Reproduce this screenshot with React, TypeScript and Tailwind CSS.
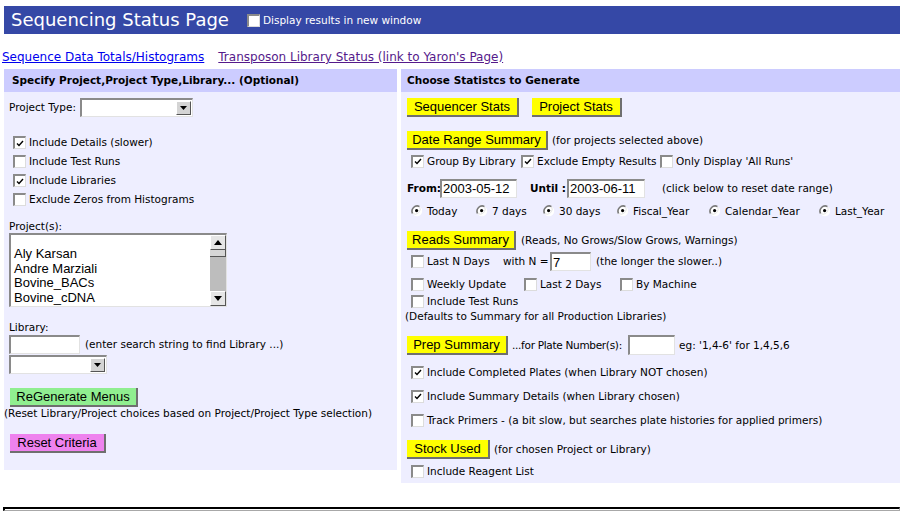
import React from "react";

function Check({ checked = false }: { checked?: boolean }) {
  return (
    <span className="inline-flex w-[13px] h-[13px] shrink-0 bg-white border-t-2 border-l-2 border-[#8a8a8a] border-r border-b border-r-[#dcdcdc] border-b-[#dcdcdc] items-center justify-center">
      {checked && (
        <svg width="8" height="7" viewBox="0 0 8 7">
          <path d="M1 3.5 L3 5.5 L7 1" stroke="#000" strokeWidth="1.4" fill="none" />
        </svg>
      )}
    </span>
  );
}

function Radio() {
  return (
    <svg width="12" height="12" viewBox="0 0 12 12" className="shrink-0">
      <circle cx="6" cy="6" r="5.2" fill="#fff" />
      <path d="M1.6 8.6 A5.2 5.2 0 0 1 8.6 1.6" stroke="#7a7a7a" strokeWidth="1.6" fill="none" />
      <path d="M8.6 1.6 A5.2 5.2 0 0 1 1.6 8.6" stroke="#e4e4e4" strokeWidth="1" fill="none" />
      <circle cx="5.6" cy="5.6" r="1.6" fill="#000" />
    </svg>
  );
}

function Btn({ w, bg, children }: { w: string; bg: string; children: React.ReactNode }) {
  return (
    <span
      className={`${w} ${bg} h-[19px] shrink-0 inline-flex items-center justify-center border-r-2 border-b-2 border-[#6f6f6f] font-['Liberation_Sans',sans-serif] text-[13px] text-black`}
    >
      {children}
    </span>
  );
}

function Field({ w, h = "h-[19px]", value }: { w: string; h?: string; value?: string }) {
  return (
    <span
      className={`${w} ${h} shrink-0 inline-flex items-center bg-white border-t-2 border-l-2 border-[#8a8a8a] border-r border-b border-r-[#e2e2e2] border-b-[#e2e2e2] pl-[1px] font-['Liberation_Sans',sans-serif] text-[13px] text-black`}
    >
      {value}
    </span>
  );
}

function Select({ w }: { w: string }) {
  return (
    <span
      className={`${w} h-[19px] shrink-0 inline-flex justify-end items-center bg-white border-t-2 border-l-2 border-[#8a8a8a] border-r border-b border-r-[#e2e2e2] border-b-[#e2e2e2] pr-[1px]`}
    >
      <span className="w-[15px] h-[14px] bg-[#d4d4d4] border-t border-l border-white border-r border-b border-r-[#555] border-b-[#555] flex items-center justify-center">
        <svg width="7" height="4" viewBox="0 0 7 4">
          <path d="M0 0 H7 L3.5 4 Z" fill="#000" />
        </svg>
      </span>
    </span>
  );
}

function CheckRow({ checked, label, h = "h-[19px]", cls = "" }: { checked?: boolean; label: string; h?: string; cls?: string }) {
  return (
    <div className={`${h} ${cls} flex items-center gap-[3px]`}>
      <Check checked={checked} />
      <span className="whitespace-nowrap">{label}</span>
    </div>
  );
}

export default function App() {
  return (
    <div className="w-[908px] h-[516px] bg-white overflow-hidden font-['DejaVu_Sans',sans-serif] text-[10.5px] text-black leading-none">
      {/* title bar */}
      <div className="mt-[6px] ml-[4px] w-[896px] h-[28px] bg-[#3548a6] flex items-center pl-[7px] text-white">
        <span className="text-[18px]">Sequencing Status Page</span>
        <span className="ml-[18px] flex items-center gap-[3px]">
          <Check />
          <span className="text-[10.5px]">Display results in new window</span>
        </span>
      </div>

      {/* links */}
      <div className="mt-[16px] h-[14px] flex items-center pl-[2px] text-[12px]">
        <a href="#" className="text-[#0000ee] underline">Sequence Data Totals/Histograms</a>
        <a href="#" className="ml-[14px] text-[#551a8b] underline">Transposon Library Status (link to Yaron's Page)</a>
      </div>

      {/* panels */}
      <div className="mt-[5px] flex items-start">
        {/* left */}
        <div className="ml-[4px] w-[393px] h-[401px] bg-[#eeeeff]">
          <div className="h-[23px] bg-[#ccccff] flex items-center pl-[8px] font-bold">
            Specify Project,Project Type,Library... (Optional)
          </div>
          <div className="pl-[5px]">
            <div className="mt-[6px] h-[19px] flex items-center gap-[4px]">
              <span>Project Type:</span>
              <Select w="w-[113px]" />
            </div>
            <div className="mt-[16px] ml-[4px]">
              <CheckRow checked label="Include Details (slower)" />
              <CheckRow label="Include Test Runs" />
              <CheckRow checked label="Include Libraries" />
              <CheckRow label="Exclude Zeros from Histograms" />
            </div>
            <div className="mt-[10px] h-[14px] flex items-center">Project(s):</div>
            <div className="w-[218px] h-[74px] flex bg-white border-t-2 border-l-2 border-[#8a8a8a] border-r border-b border-r-[#e2e2e2] border-b-[#e2e2e2] overflow-hidden">
              <div className="flex-1 pl-[3px] pt-[12px] font-['Liberation_Sans',sans-serif] text-[13px] leading-[14.5px] overflow-hidden">
                <div>Aly Karsan</div>
                <div>Andre Marziali</div>
                <div>Bovine_BACs</div>
                <div>Bovine_cDNA</div>
                <div>Cancer_Genomics</div>
              </div>
              <div className="w-[16px] bg-[#bdbdbd] flex flex-col justify-between">
                <div>
                  <div className="h-[15px] bg-[#e6e6e6] border-t border-l border-white border-r border-b border-r-[#555] border-b-[#555] flex items-center justify-center">
                    <svg width="8" height="5" viewBox="0 0 8 5">
                      <path d="M0 5 H8 L4 0 Z" fill="#000" />
                    </svg>
                  </div>
                  <div className="h-[7px] bg-[#d6d6d6] border-b border-r border-[#555]" />
                </div>
                <div className="h-[15px] bg-[#e6e6e6] border-t border-l border-white border-r border-b border-r-[#555] border-b-[#555] flex items-center justify-center">
                  <svg width="8" height="5" viewBox="0 0 8 5">
                    <path d="M0 0 H8 L4 5 Z" fill="#000" />
                  </svg>
                </div>
              </div>
            </div>
            <div className="mt-[13px] h-[14px] flex items-center">Library:</div>
            <div className="mt-[1px] h-[19px] flex items-center gap-[5px]">
              <Field w="w-[71px]" />
              <span>(enter search string to find Library ...)</span>
            </div>
            <div className="mt-[1px] flex">
              <Select w="w-[98px]" />
            </div>
            <div className="mt-[14px] ml-[1px] flex">
              <Btn w="w-[128px]" bg="bg-[#90ee90]">ReGenerate Menus</Btn>
            </div>
            <div className="h-[13px] -ml-[5px] flex items-center whitespace-nowrap">
              (Reset Library/Project choices based on Project/Project Type selection)
            </div>
            <div className="mt-[14px] ml-[1px] flex">
              <Btn w="w-[96px]" bg="bg-[#ee82ee]">Reset Criteria</Btn>
            </div>
          </div>
        </div>

        {/* right */}
        <div className="ml-[4px] w-[499px] h-[414px] bg-[#eeeeff]">
          <div className="h-[23px] bg-[#ccccff] flex items-center pl-[6px] font-bold">
            Choose Statistcs to Generate
          </div>
          <div className="pl-[6px]">
            <div className="mt-[6px] flex gap-[13px]">
              <Btn w="w-[112px]" bg="bg-[#ffff00]">Sequencer Stats</Btn>
              <Btn w="w-[90px]" bg="bg-[#ffff00]">Project Stats</Btn>
            </div>
            <div className="mt-[14px] flex items-center gap-[4px]">
              <Btn w="w-[141px]" bg="bg-[#ffff00]">Date Range Summary</Btn>
              <span>(for projects selected above)</span>
            </div>
            <div className="mt-[2px] h-[18px] ml-[4px] flex items-center">
              <CheckRow checked label="Group By Library" h="h-[18px]" cls="w-[110px]" />
              <CheckRow checked label="Exclude Empty Results" h="h-[18px]" cls="w-[139px]" />
              <CheckRow label="Only Display 'All Runs'" h="h-[18px]" />
            </div>
            <div className="mt-[8px] h-[20px] flex items-center">
              <span className="font-bold w-[33px]">From:</span>
              <Field w="w-[77px]" value="2003-05-12" />
              <span className="font-bold ml-[13px] w-[37px]">Until :</span>
              <Field w="w-[78px]" value="2003-06-11" />
              <span className="ml-[17px]">(click below to reset date range)</span>
            </div>
            <div className="mt-[5px] h-[16px] ml-[4px] flex items-center">
              {[
                ["Today", "w-[65px]"],
                ["7 days", "w-[67px]"],
                ["30 days", "w-[74px]"],
                ["Fiscal_Year", "w-[92px]"],
                ["Calendar_Year", "w-[110px]"],
                ["Last_Year", ""],
              ].map(([t, w]) => (
                <span key={t} className={`${w} flex items-center gap-[4px]`}>
                  <Radio />
                  <span>{t}</span>
                </span>
              ))}
            </div>
            <div className="mt-[12px] flex items-center gap-[5px]">
              <Btn w="w-[109px]" bg="bg-[#ffff00]">Reads Summary</Btn>
              <span>(Reads, No Grows/Slow Grows, Warnings)</span>
            </div>
            <div className="mt-[2px] h-[19px] ml-[4px] flex items-center">
              <CheckRow label="Last N Days" cls="w-[92px]" />
              <span className="w-[47px]">with N =</span>
              <Field w="w-[41px]" value="7" />
              <span className="ml-[5px]">(the longer the slower..)</span>
            </div>
            <div className="mt-[4px] h-[18px] ml-[4px] flex items-center">
              <CheckRow label="Weekly Update" h="h-[18px]" cls="w-[113px]" />
              <CheckRow label="Last 2 Days" h="h-[18px]" cls="w-[96px]" />
              <CheckRow label="By Machine" h="h-[18px]" />
            </div>
            <CheckRow label="Include Test Runs" h="h-[16px]" cls="ml-[4px]" />
            <div className="h-[14px] -ml-[2px] flex items-center">(Defaults to Summary for all Production Libraries)</div>
            <div className="mt-[12px] h-[20px] flex items-center">
              <Btn w="w-[101px]" bg="bg-[#ffff00]">Prep Summary</Btn>
              <span className="ml-[4px] w-[116px] whitespace-nowrap tracking-[-0.3px]">...for Plate Number(s):</span>
              <Field w="w-[47px]" h="h-[20px]" />
              <span className="ml-[4px]">eg: '1,4-6' for 1,4,5,6</span>
            </div>
            <CheckRow checked label="Include Completed Plates (when Library NOT chosen)" h="h-[18px]" cls="mt-[8px] ml-[4px]" />
            <CheckRow checked label="Include Summary Details (when Library chosen)" h="h-[18px]" cls="mt-[6px] ml-[4px]" />
            <CheckRow label="Track Primers - (a bit slow, but searches plate histories for applied primers)" h="h-[18px]" cls="mt-[6px] ml-[4px]" />
            <div className="mt-[11px] flex items-center gap-[4px]">
              <Btn w="w-[83px]" bg="bg-[#ffff00]">Stock Used</Btn>
              <span>(for chosen Project or Library)</span>
            </div>
            <CheckRow label="Include Reagent List" h="h-[18px]" cls="mt-[3px] ml-[4px]" />
          </div>
        </div>
      </div>

      {/* bottom rule */}
      <div className="mt-[24px] ml-[3px] w-[897px] h-[4px] border-t-2 border-l-2 border-black border-b border-r border-b-[#a8a8a8] border-r-[#a8a8a8]" />
    </div>
  );
}
